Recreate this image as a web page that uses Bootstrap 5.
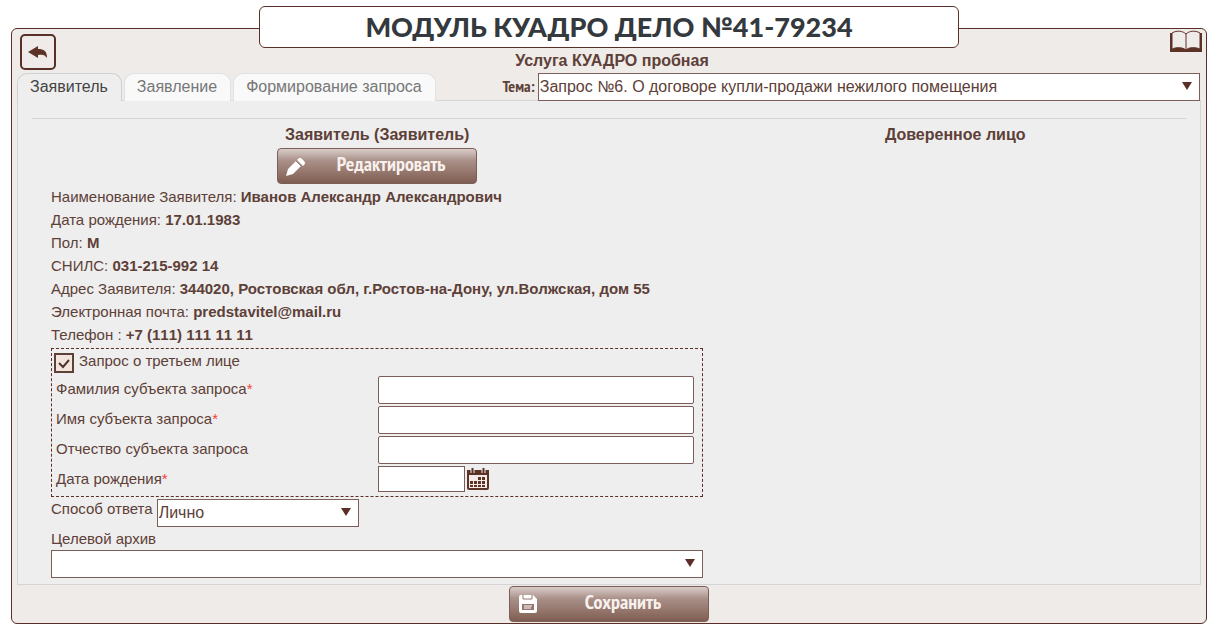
<!DOCTYPE html>
<html lang="ru">
<head>
<meta charset="utf-8">
<meta name="viewport" content="width=device-width, initial-scale=1">
<title>Модуль КУАДРО</title>
<link rel="stylesheet" href="https://cdn.jsdelivr.net/npm/bootstrap@5.3.0/dist/css/bootstrap.min.css">
<style>
  :root { --brown: #5d4037; --dark: #5a2f27; --line: #7b5e57; }
  body { font-family: "Liberation Sans", Arial, sans-serif; font-size: 15px; line-height: 23px; color: var(--brown); background: #fff; padding: 28px 16px 12px 11px; }
  .frame { border: 1px solid var(--dark); border-radius: 6px; background: #efebe9; padding: 0 5px 1px; }
  .side { width: 40px; }
  .back-btn { width: 36px; height: 36px; border: 2px solid var(--dark); border-radius: 5px; background: transparent; margin: 5px 0 0 3px; padding: 0; }
  .book-btn { display: block; width: 34px; height: 24px; border: 0; background: transparent; padding: 0; margin: 1px -2px 0 auto; }
  .case-title { font: 900 27px/40px Lato, "Open Sans", sans-serif; color: #33393d; background: #fff; border: 1px solid var(--dark); border-radius: 6px; width: 700px; max-width: 100%; margin: -23px 0 0; height: 42px; }
  .service { font-size: 16px; line-height: 25px; font-weight: bold; margin: 0; padding-left: 6px; }
  .tab-row { margin-bottom: -1px; position: relative; z-index: 1; }
  .tabs { border: 0; gap: 2px; }
  .tabs .nav-link { font-size: 16px; line-height: 24px; height: 28px; padding: 1px 13px 1px 12px; border: 1px solid #e2e2e2; border-bottom: 0; border-radius: 10px 10px 0 0; background: #f9f9f9; color: #777; margin: 0; }
  .tabs .nav-link.active { background: #eee; border-color: #d0d0d0; color: #444; }
  .topic { width: 59%; }
  .topic-box { flex: 1 1 0; padding-right: 1px; }
  .topic-label { font: bold 16px/26px "PT Sans Narrow", "Liberation Sans Narrow", "Liberation Sans", sans-serif; padding-right: 3px; }
  .pick { appearance: none; height: 28px; width: 100%; border: 1px solid var(--line); border-radius: 0; padding: 0 24px 0 1px; font-size: 16px; line-height: 24px; color: var(--brown);
    background: #fff url("data:image/svg+xml,%3Csvg xmlns='http://www.w3.org/2000/svg' width='10' height='8'%3E%3Cpath d='M0 0h10L5 8z' fill='%235a2f27'/%3E%3C/svg%3E") no-repeat right 7px top 8px; }
  .pane { border: 1px solid #d3d5d6; background: #eee; padding: 17px 14px 6px; }
  .pane hr { margin: 0 0 4px; border-color: #d4d4d4; border-top-width: 1px; opacity: 1; }
  .applicant { width: 60%; padding: 0 21px 0 19px; }
  .proxy { width: 40%; }
  .who { font-size: 16px; line-height: 23px; font-weight: bold; margin: 0; }
  .phone { font-kerning: none; }
  .grad-btn { width: 200px; height: 36px; border: 1px solid var(--line); border-radius: 4px; padding: 0 0 0 8px; color: #f7f0ed; font: bold 20px/30px "PT Sans Narrow", "Liberation Sans Narrow", "Liberation Sans", sans-serif; background: linear-gradient(#d9cdc9, #a88f87 35%, #9a7d73 60%, #805d52); }
  .grad-btn span { padding-bottom: 4px; }
  .edit-wrap { margin: 2px 0 1px; }
  .save-wrap { padding-top: 1px; }
  .third { border: 1px dashed var(--dark); padding: 4px 8px 4px 4px; margin-top: 2px; }
  .tick { appearance: none; width: 20px; height: 20px; border: 2px solid var(--brown); background: #f3e4dd; margin: 0 5px 0 -2px; }
  .tick:checked { background: #f3e4dd url("data:image/svg+xml,%3Csvg xmlns='http://www.w3.org/2000/svg' width='16' height='16' fill='none' stroke='%234e342e' stroke-width='2'%3E%3Cpath d='M3 8l4 4 6-7'/%3E%3C/svg%3E") center no-repeat; }
  .tick-row { height: 23px; }
  .tick-row label { line-height: 16px; }
  .req { color: #f44336; }
  .fields { display: grid; grid-template-columns: 322px 1fr; row-gap: 2px; }
  .fields label { line-height: 26px; }
  .box { height: 28px; width: 100%; border: 1px solid var(--line); border-radius: 2px; background: #fff; padding: 0 4px; color: var(--brown); }
  .box.date { width: 87px; height: 26px; border-radius: 0; }
  .cal { border: 0; background: transparent; padding: 0; width: 24px; height: 24px; margin-left: 1px; }
  .reply { margin-top: 2px; gap: 4px; }
  .reply label { line-height: 20px; }
  .reply .pick { width: 202px; }
  svg { display: block; }
</style>
</head>
<body>
<main class="frame">
  <header class="d-flex justify-content-between align-items-start">
    <div class="side">
      <button type="button" class="back-btn d-flex align-items-center justify-content-center" aria-label="Назад">
        <svg width="20" height="14" viewBox="0 0 20 14"><path d="M0 7L10 1v3c6 0 9 2 9 9-2-3-4-4-9-3v3z" fill="#5d3327"/></svg>
      </button>
    </div>
    <div class="flex-grow-1 d-flex flex-column align-items-center">
      <h1 class="case-title text-center">МОДУЛЬ КУАДРО ДЕЛО №41-79234</h1>
      <p class="service">Услуга КУАДРО пробная</p>
    </div>
    <div class="side">
      <button type="button" class="book-btn" aria-label="Справка">
        <svg width="34" height="24" viewBox="0 0 34 24"><path d="M1 3h2v16c5-2 10-2 14 1 4-3 9-3 14-1V3h2v19H1z" fill="#5d3327"/><path d="M3 3c5-3 11-2 14 1 3-3 9-4 14-1v16c-5-2-11-2-14 1-4-3-9-3-14-1zM17 4v16" fill="#efebe9" stroke="#5d3327"/></svg>
      </button>
    </div>
  </header>

  <div class="tab-row d-flex justify-content-between">
    <ul class="nav nav-tabs tabs">
      <li class="nav-item"><a class="nav-link active" href="#applicant" aria-current="page">Заявитель</a></li>
      <li class="nav-item"><a class="nav-link" href="#statement">Заявление</a></li>
      <li class="nav-item"><a class="nav-link" href="#request">Формирование запроса</a></li>
    </ul>
    <div class="topic d-flex">
      <label class="topic-label" for="topic">Тема:</label>
      <div class="topic-box"><select id="topic" class="pick"><option>Запрос №6. О договоре купли-продажи нежилого помещения</option></select></div>
    </div>
  </div>

  <section id="applicant" class="pane">
    <hr>
    <div class="d-flex">
      <div class="applicant">
        <h2 class="who text-center">Заявитель (Заявитель)</h2>
        <div class="edit-wrap d-flex justify-content-center">
          <button type="button" class="grad-btn d-flex align-items-center">
            <svg width="20" height="20" viewBox="0 0 20 20"><path d="M0 20l2-7 8-8 5 5-8 8zM11 4l1-1q2-2 4 0l2 2q2 2 0 4l-1 1z" fill="#fff"/><path d="M10 5l6 6" stroke="#a1857b"/></svg>
            <span class="flex-grow-1 text-center">Редактировать</span>
          </button>
        </div>
        <div>Наименование Заявителя: <b>Иванов Александр Александрович</b></div>
        <div>Дата рождения: <b>17.01.1983</b></div>
        <div>Пол: <b>М</b></div>
        <div>СНИЛС: <b>031-215-992 14</b></div>
        <div>Адрес Заявителя: <b>344020, Ростовская обл, г.Ростов-на-Дону, ул.Волжская, дом 55</b></div>
        <div>Электронная почта: <b>predstavitel@mail.ru</b></div>
        <div>Телефон : <b class="phone">+7 (111) 111 11 11</b></div>

        <div class="third">
          <div class="tick-row d-flex align-items-start">
            <input id="third" class="tick" type="checkbox" checked><label for="third">Запрос о третьем лице</label>
          </div>
          <div class="fields">
            <label for="surname">Фамилия субъекта запроса<span class="req">*</span></label><input id="surname" class="box" type="text">
            <label for="name">Имя субъекта запроса<span class="req">*</span></label><input id="name" class="box" type="text">
            <label for="patronymic">Отчество субъекта запроса</label><input id="patronymic" class="box" type="text">
            <label for="birth">Дата рождения<span class="req">*</span></label>
            <div class="d-flex align-items-center">
              <input id="birth" class="box date" type="text">
              <button type="button" class="cal" aria-label="Выбрать дату">
                <svg width="24" height="24" viewBox="0 0 24 24"><rect x="2" y="4" width="20" height="18" rx="1" fill="#f5ece8" stroke="#5d3327" stroke-width="2"/><path d="M1 3h22v5H1z" fill="#5d3327"/><path d="M6.500 1v5M17.500 1v5" stroke="#efebe9" stroke-width="4"/><path d="M6.500 1v5M17.500 1v5" stroke="#5d3327" stroke-width="2"/><path d="M12 10h3v3h-3zm4 0h3v3h-3zM4 14h3v3H4zm4 0h3v3H8zm4 0h3v3h-3zm4 0h3v3h-3zM4 18h3v2H4zm4 0h3v2H8zm4 0h3v2h-3zm4 0h3v2h-3z" fill="#5d3327"/></svg>
              </button>
            </div>
          </div>
        </div>

        <div class="reply d-flex">
          <label for="reply">Способ ответа</label>
          <select id="reply" class="pick"><option>Лично</option></select>
        </div>
        <label class="d-block" for="archive">Целевой архив</label>
        <select id="archive" class="pick d-block"><option></option></select>
      </div>
      <div class="proxy">
        <h2 class="who text-center">Доверенное лицо</h2>
      </div>
    </div>
  </section>

  <div class="save-wrap d-flex justify-content-center">
    <button type="button" class="grad-btn d-flex align-items-center">
      <svg width="20" height="20" viewBox="0 0 20 20"><path d="M1 3q0-2 2-2h12l4 4v12q0 2-2 2H3q-2 0-2-2z" fill="#fff"/><path d="M5 1v4h9V1" fill="none" stroke="#94766c"/><path d="M4 10h12v6H4z" fill="#94766c"/><path d="M6 12h8M6 14h7" stroke="#fff"/></svg>
      <span class="flex-grow-1 text-center">Сохранить</span>
    </button>
  </div>
</main>
<script src="https://cdn.jsdelivr.net/npm/bootstrap@5.3.0/dist/js/bootstrap.bundle.min.js"></script>
</body>
</html>
